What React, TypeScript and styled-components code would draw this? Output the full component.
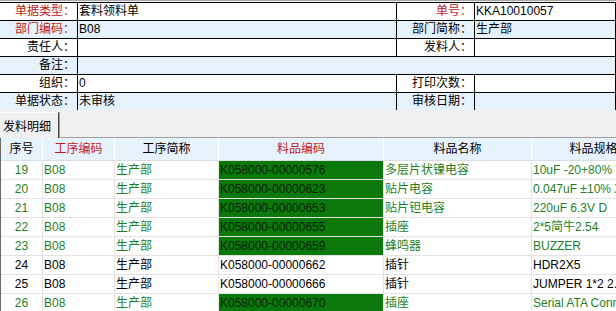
import styled, { createGlobalStyle } from "styled-components";

const Global = createGlobalStyle`
    html, body {
        margin: 0;
        padding: 0;
        background: #f0f0f0;
    }
    body {
        font-family: "Liberation Sans", "Noto Sans CJK SC", sans-serif;
        font-size: 12px;
        color: #000;
    }
`;

const Page = styled.div`
    width: 616px;
    height: 311px;
    overflow: hidden;
    background: #f0f0f0;
    border-top: 1px solid #a8a8a8;
    box-sizing: border-box;
    padding-top: 1px;
`;

const Form = styled.div`
    display: flex;
    flex-direction: column;
`;

const FormRow = styled.div<{ $alt?: boolean; $wide?: boolean }>`
    display: grid;
    grid-template-columns: ${(p) => (p.$wide ? "77px 1fr" : "77px 319px 78px 1fr")};
    height: 18px;
    box-sizing: border-box;
    border-top: 1px solid #000;
    border-right: 1px solid #000;
    background: ${(p) => (p.$alt ? "#e5f1fb" : "#fff")};
    line-height: 17px;
`;

const Label = styled.div<{ $red?: boolean; $line?: boolean }>`
    text-align: right;
    padding-right: 2px;
    color: ${(p) => (p.$red ? "#c41a1a" : "#000")};
    border-left: ${(p) => (p.$line ? "1px solid #000" : "none")};
    white-space: nowrap;
`;

const Value = styled.div`
    border-left: 1px solid #000;
    padding-left: 1px;
    white-space: nowrap;
    overflow: hidden;
`;

const TabStrip = styled.div`
    height: 28px;
    box-sizing: border-box;
    border-bottom: 1px solid #a0a0a0;
    display: flex;
    align-items: flex-end;
`;

const Tab = styled.div`
    width: 59px;
    height: 26px;
    box-sizing: border-box;
    margin-bottom: -1px;
    padding-left: 3px;
    background: #f0f0f0;
    border-top: 1px solid #fff;
    border-right: 1px solid #404040;
    box-shadow: 1px 0 0 #a0a0a0;
    display: flex;
    align-items: center;
`;

const Grid = styled.div`
    border-left: 1px solid #6a6a6a;
    background: #fff;
    width: 700px;
`;

const GridRow = styled.div<{ $head?: boolean }>`
    display: grid;
    grid-template-columns: 42px 72px 104px 165px 148px 124px 60px;
    height: ${(p) => (p.$head ? "23px" : "19px")};
    box-sizing: border-box;
    border-bottom: 1px solid ${(p) => (p.$head ? "#d8dde2" : "#e3e3e3")};
    background: ${(p) => (p.$head ? "#e6f2fc" : "#fff")};
    line-height: ${(p) => (p.$head ? "22px" : "18px")};
`;

const HeadCell = styled.div<{ $red?: boolean }>`
    text-align: center;
    border-right: 1px solid #fff;
    color: ${(p) => (p.$red ? "#c41a1a" : "#000")};
    white-space: nowrap;
    overflow: hidden;
`;

const Cell = styled.div<{ $green?: boolean; $fill?: boolean; $center?: boolean }>`
    border-right: 1px solid #e3e3e3;
    padding-left: ${(p) => (p.$center ? "0" : "1px")};
    text-align: ${(p) => (p.$center ? "center" : "left")};
    color: ${(p) => (p.$fill ? "#0b230b" : p.$green ? "#1f7f1f" : "#000")};
    background: ${(p) => (p.$fill ? "#0a780a" : "transparent")};
    white-space: nowrap;
    overflow: hidden;
`;

const rows = [
    { no: 19, code: "K058000-00000576", name: "多层片状镍电容", spec: "10uF -20+80% Y5V 0805", green: true },
    { no: 20, code: "K058000-00000623", name: "贴片电容", spec: "0.047uF ±10% X7R 0603", green: true },
    { no: 21, code: "K058000-00000653", name: "贴片钽电容", spec: "220uF 6.3V D", green: true },
    { no: 22, code: "K058000-00000655", name: "插座", spec: "2*5简牛2.54", green: true },
    { no: 23, code: "K058000-00000659", name: "蜂鸣器", spec: "BUZZER", green: true },
    { no: 24, code: "K058000-00000662", name: "插针", spec: "HDR2X5", green: false },
    { no: 25, code: "K058000-00000666", name: "插针", spec: "JUMPER 1*2 2.54", green: false },
    { no: 26, code: "K058000-00000670", name: "插座", spec: "Serial ATA Connector", green: true },
];

const App = () => {
    return (
        <Page>
            <Global />
            <Form>
                <FormRow>
                    <Label $red>单据类型：</Label>
                    <Value>套料领料单</Value>
                    <Label $red $line>单号：</Label>
                    <Value>KKA10010057</Value>
                </FormRow>
                <FormRow $alt>
                    <Label $red>部门编码：</Label>
                    <Value>B08</Value>
                    <Label $line>部门简称：</Label>
                    <Value>生产部</Value>
                </FormRow>
                <FormRow>
                    <Label>责任人：</Label>
                    <Value />
                    <Label $line>发料人：</Label>
                    <Value />
                </FormRow>
                <FormRow $alt $wide>
                    <Label>备注：</Label>
                    <Value />
                </FormRow>
                <FormRow>
                    <Label>组织：</Label>
                    <Value>0</Value>
                    <Label $line>打印次数：</Label>
                    <Value />
                </FormRow>
                <FormRow $alt>
                    <Label>单据状态：</Label>
                    <Value>未审核</Value>
                    <Label $line>审核日期：</Label>
                    <Value />
                </FormRow>
            </Form>
            <TabStrip>
                <Tab>发料明细</Tab>
            </TabStrip>
            <Grid>
                <GridRow $head>
                    <HeadCell>序号</HeadCell>
                    <HeadCell $red>工序编码</HeadCell>
                    <HeadCell>工序简称</HeadCell>
                    <HeadCell $red>料品编码</HeadCell>
                    <HeadCell>料品名称</HeadCell>
                    <HeadCell>料品规格</HeadCell>
                    <HeadCell />
                </GridRow>
                {rows.map((r) => {
                    return (
                        <GridRow key={r.no}>
                            <Cell $center $green={r.green}>{r.no}</Cell>
                            <Cell $green={r.green}>B08</Cell>
                            <Cell $green={r.green}>生产部</Cell>
                            <Cell $fill={r.green}>{r.code}</Cell>
                            <Cell $green={r.green}>{r.name}</Cell>
                            <Cell $green={r.green}>{r.spec}</Cell>
                            <Cell />
                        </GridRow>
                    );
                })}
            </Grid>
        </Page>
    );
};

export default App;
